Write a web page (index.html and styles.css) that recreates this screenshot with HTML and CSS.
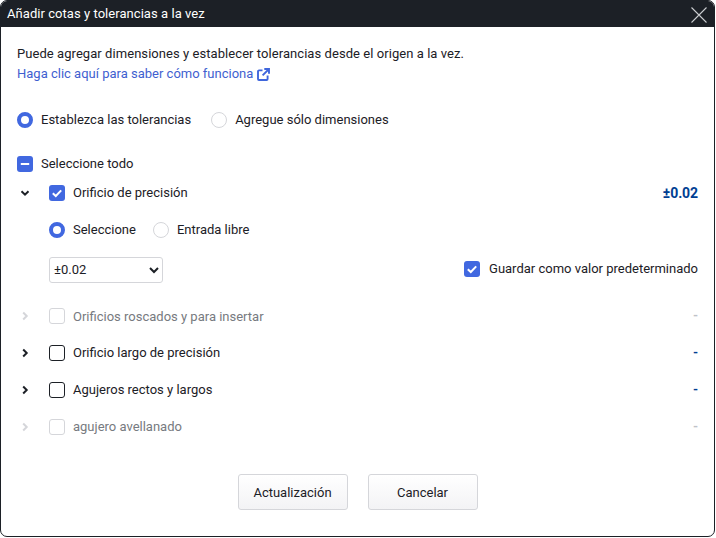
FILE: index.html
```html
<!DOCTYPE html>
<html lang="es">
<head>
<meta charset="utf-8">
<title>Añadir cotas y tolerancias a la vez</title>
<link rel="stylesheet" href="styles.css">
</head>
<body>
<div class="dialog">
  <header class="titlebar">
    <span class="title">Añadir cotas y tolerancias a la vez</span>
    <svg class="close" width="16" height="16" viewBox="0 0 16 16"><path d="M.5.5l15 15M15.500.5l-15 15" fill="none" stroke="#c9cbce" stroke-width="1.100"/></svg>
  </header>
  <main class="body">
    <p class="intro">Puede agregar dimensiones y establecer tolerancias desde el origen a la vez.</p>
    <a class="help" href="#">Haga clic aquí para saber cómo funciona
      <svg width="13" height="13" viewBox="0 0 13 13"><path d="M5.500 2.400H2a1 1 0 0 0-1 1V11a1 1 0 0 0 1 1h7.600a1 1 0 0 0 1-1V7.500M7.300 1h4.700v4.700M12 1L5.600 7.400" fill="none" stroke="#3f66dc" stroke-width="1.900"/></svg>
    </a>
    <div class="radios top-radios">
      <span class="radio on"></span><span class="lbl">Establezca las tolerancias</span>
      <span class="radio second"></span><span class="lbl">Agregue sólo dimensiones</span>
    </div>
    <div class="select-all">
      <span class="box on"><svg width="16" height="16" viewBox="0 0 16 16"><path d="M3.800 8h8.400" stroke="#fff" stroke-width="2.200"/></svg></span>
      <span class="lbl">Seleccione todo</span>
    </div>

    <div class="row first">
      <svg class="chev" width="10" height="10" viewBox="0 0 10 10"><path d="M1.500 3.200L5 6.700l3.500-3.500" fill="none" stroke="#1c2026" stroke-width="2"/></svg>
      <span class="box on"><svg width="16" height="16" viewBox="0 0 16 16"><path d="M3.800 8.200l3 2.800 5.400-5.600" fill="none" stroke="#fff" stroke-width="2"/></svg></span>
      <span class="lbl grow">Orificio de precisión</span>
      <span class="val strong big">±0.02</span>
    </div>
    <div class="detail">
      <div class="radios">
        <span class="radio on"></span><span class="lbl">Seleccione</span>
        <span class="radio second small-gap"></span><span class="lbl">Entrada libre</span>
      </div>
      <div class="select-row">
        <select class="sel"><option>±0.02</option></select>
        <div class="save">
          <span class="box on"><svg width="16" height="16" viewBox="0 0 16 16"><path d="M3.800 8.200l3 2.800 5.400-5.600" fill="none" stroke="#fff" stroke-width="2"/></svg></span>
          <span class="lbl">Guardar como valor predeterminado</span>
        </div>
      </div>
    </div>

    <div class="row off">
      <svg class="chev" width="10" height="10" viewBox="0 0 10 10"><path d="M3.200 1.500L6.700 5 3.200 8.500" fill="none" stroke="#d5d6da" stroke-width="2"/></svg>
      <span class="box"></span>
      <span class="lbl grow low">Orificios roscados y para insertar</span>
      <span class="val">-</span>
    </div>
    <div class="row">
      <svg class="chev" width="10" height="10" viewBox="0 0 10 10"><path d="M3.200 1.500L6.700 5 3.200 8.500" fill="none" stroke="#1c2026" stroke-width="2"/></svg>
      <span class="box"></span>
      <span class="lbl grow">Orificio largo de precisión</span>
      <span class="val strong">-</span>
    </div>
    <div class="row">
      <svg class="chev" width="10" height="10" viewBox="0 0 10 10"><path d="M3.200 1.500L6.700 5 3.200 8.500" fill="none" stroke="#1c2026" stroke-width="2"/></svg>
      <span class="box"></span>
      <span class="lbl grow">Agujeros rectos y largos</span>
      <span class="val strong">-</span>
    </div>
    <div class="row off">
      <svg class="chev" width="10" height="10" viewBox="0 0 10 10"><path d="M3.200 1.500L6.700 5 3.200 8.500" fill="none" stroke="#d5d6da" stroke-width="2"/></svg>
      <span class="box"></span>
      <span class="lbl grow">agujero avellanado</span>
      <span class="val">-</span>
    </div>

    <div class="actions">
      <button class="btn">Actualización</button>
      <button class="btn">Cancelar</button>
    </div>
  </main>
</div>
</body>
</html>
```
FILE: styles.css
```css
* { box-sizing: border-box; }
html, body { margin: 0; background: #fff; }
body { font-family: Roboto, "Liberation Sans", sans-serif; font-size: 13px; line-height: 20px; color: #1c2026; }
.dialog { width: 715px; height: 537px; border: 1px solid #1c2026; border-radius: 7px; overflow: hidden; background: #fff; display: flex; flex-direction: column; }
.titlebar { height: 26px; flex: none; background: #1c2026; color: #fff; display: flex; align-items: center; justify-content: space-between; padding: 0 7px 0 6px; }
.title { letter-spacing: .05px; }
.close { flex: none; margin-top: 1px; }
.body { flex: 1; padding: 17px 16px 0; display: flex; flex-direction: column; }
.intro { margin: 0; height: 20px; letter-spacing: .06px; }
.help { color: #3f5fd0; text-decoration: none; display: flex; align-items: center; gap: 4px; height: 20px; }
.radios { display: flex; align-items: center; height: 20px; }
.top-radios { margin-top: 26px; }
.radio { width: 16px; height: 16px; border: 1px solid #d5d6da; border-radius: 50%; flex: none; margin-right: 8px; background: #fff; }
.radio.on { border: 4.500px solid #4168e0; }
.radio.second { margin-left: 20px; }
.radio.small-gap { margin-left: 17px; }
.select-all { display: flex; align-items: center; gap: 8px; height: 20px; margin-top: 24px; }
.box { width: 16px; height: 16px; flex: none; border: 1px solid #1c2026; border-radius: 3px; display: block; background: #fff; }
.box svg { display: block; }
.box.on { background: #4168e0; border: 0; }
.row { display: flex; align-items: center; height: 20px; margin-top: 17px; }
.row.first { margin-top: 9px; }
.chev { flex: none; margin: 0 19px 0 3px; }
.row .box { margin-right: 8px; }
.grow { flex: 1; }
.low { padding-top: 2px; }
.val { color: #c0c2c8; font-weight: 700; }
.val.strong { color: #003e92; }
.val.big { font-size: 14px; letter-spacing: -.1px; }
.off .lbl { color: #777a80; }
.off .box { border-color: #d5d6da; }
.detail { padding: 17px 0 0 32px; margin-bottom: 6px; }
.select-row { display: flex; align-items: center; justify-content: space-between; margin-top: 17px; }
.save { display: flex; align-items: center; gap: 9px; padding-bottom: 2px; }
.sel { width: 114px; height: 26px; border: 1px solid #d5d6da; border-radius: 3px; background: #fff; color: #1c2026; font: inherit; padding: 0 0 2px; }
.actions { display: flex; justify-content: center; gap: 20px; margin-top: 37px; }
.btn { width: 110px; height: 36px; border: 1px solid #d5d6da; border-radius: 3px; background: linear-gradient(#fff, #f3f3f5); color: #1c2026; font: inherit; padding: 2px 0 0; }
```
